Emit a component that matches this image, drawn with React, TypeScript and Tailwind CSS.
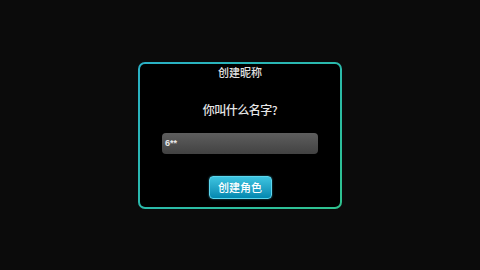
export default function App() {
  return (
    <div
      className="w-[480px] h-[270px] bg-[#0b0b0b] flex items-center justify-center"
      style={{ fontFamily: '"Noto Sans CJK SC", "Noto Sans", sans-serif' }}
    >
      {/* gradient border frame */}
      <div className="w-[204px] h-[147px] rounded-[7px] p-[2px] bg-gradient-to-br from-[#2ab0c6] to-[#2fc28e]">
        <div className="w-full h-full rounded-[5px] bg-black flex flex-col items-center">
          <div className="mt-[1px] text-[11px] leading-[14px] font-medium text-[#e2e2e2]">创建昵称</div>
          <div className="mt-[23px] text-[12px] leading-[16px] tracking-[-0.5px] font-medium text-[#e6e6e6]">你叫什么名字?</div>
          <div className="mt-[15px] w-[156px] h-[21px] rounded-[4px] bg-gradient-to-b from-[#5e5e5e] to-[#424242] flex items-center px-[3px]">
            <span className="text-[9px] leading-none font-bold text-[#e8e8e8]" style={{ fontFamily: '"Liberation Sans", sans-serif' }}>
              6**
            </span>
          </div>
          <button className="mt-[22px] w-[63px] h-[23px] rounded-[4px] border border-[#5cd6ee] bg-gradient-to-b from-[#3cc4e0] to-[#0088b0] text-[11px] leading-none font-medium text-white shadow-[0_0_2px_rgba(60,200,230,0.6)]">
            创建角色
          </button>
        </div>
      </div>
    </div>
  );
}
